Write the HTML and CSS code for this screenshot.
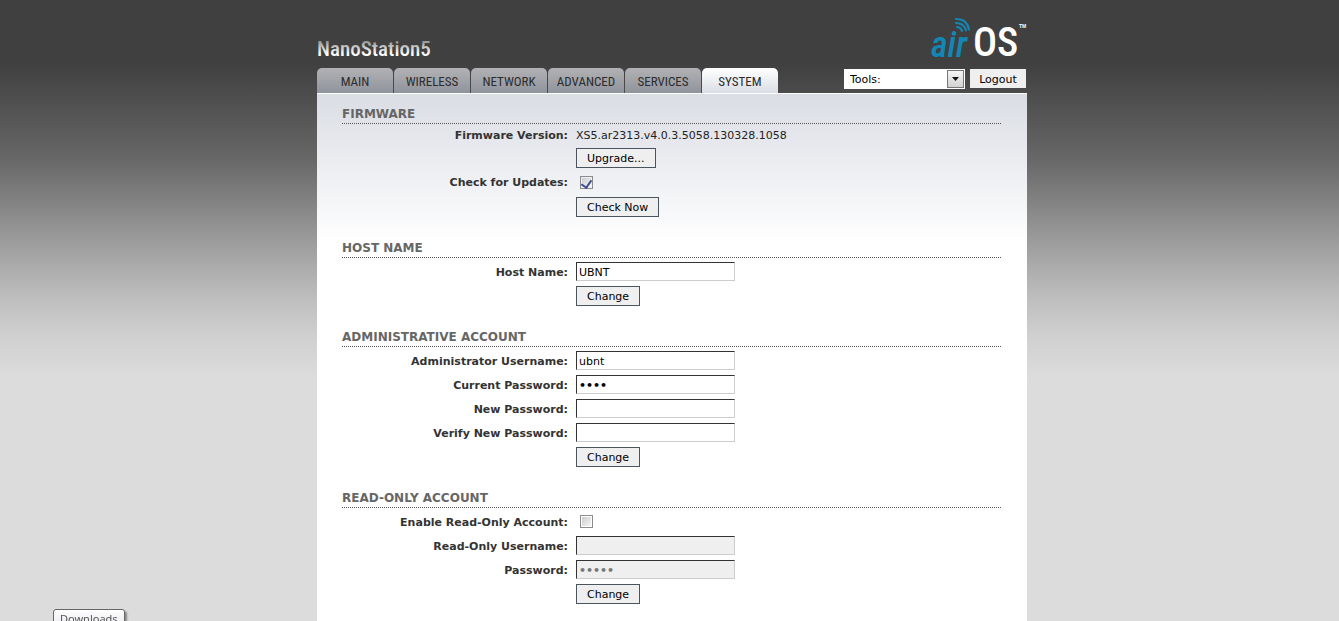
FILE: index.html
```html
<!DOCTYPE html>
<html lang="en">
<head>
<meta charset="utf-8">
<title>NanoStation5 - System</title>
<link rel="stylesheet" href="styles.css">
</head>
<body>
<div class="page">
  <header class="header">
    <h1 class="device"><svg width="116" height="24" role="img" aria-label="NanoStation5">
      <defs><linearGradient id="silver" x1="0" y1="0" x2="0" y2="1"><stop offset=".2" stop-color="#999"/><stop offset=".7" stop-color="#fff"/></linearGradient></defs>
      <text class="device-text" x="0" y="18" fill="url(#silver)">NanoStation5</text>
    </svg></h1>
    <svg class="logo" width="96" height="46" role="img" aria-label="airOS">
      <text class="logo-air" x="0" y="41">air</text>
      <text class="logo-os" x="42" y="40">OS</text>
      <text class="logo-tm" x="88" y="12">TM</text>
      <g fill="none" stroke="#1287b5" stroke-width="2" stroke-linecap="round">
        <path d="M26 11q4 .5 5 4"/>
        <path d="M25 7q8 0 10 7.500"/>
        <path d="M25 3q11 0 13 10.500"/>
      </g>
    </svg>
  </header>
  <div class="bar">
    <nav class="tabs">
      <a class="tab" href="#main">MAIN</a>
      <a class="tab" href="#wireless">WIRELESS</a>
      <a class="tab" href="#network">NETWORK</a>
      <a class="tab" href="#advanced">ADVANCED</a>
      <a class="tab" href="#services">SERVICES</a>
      <a class="tab tab-active" href="#system">SYSTEM</a>
    </nav>
    <div class="tools">
      <div class="select-wrap">
        <select class="select" aria-label="Tools"><option>Tools:</option></select>
        <span class="arrow"><svg width="7" height="4"><path d="M0 0h7L3.500 4z" fill="#111"/></svg></span>
      </div>
      <button class="logout" type="button">Logout</button>
    </div>
  </div>
  <main class="panel">
    <section class="section firmware">
      <h2 class="heading">FIRMWARE</h2>
      <div class="row row-version"><span class="label">Firmware Version:</span><span>XS5.ar2313.v4.0.3.5058.130328.1058</span></div>
      <div class="row"><button class="button" type="button">Upgrade...</button></div>
      <div class="row row-updates"><label class="label" for="updates">Check for Updates:</label><input class="check" id="updates" type="checkbox" checked></div>
      <div class="row"><button class="button" type="button">Check Now</button></div>
    </section>
    <section class="section">
      <h2 class="heading">HOST NAME</h2>
      <div class="row"><label class="label" for="host">Host Name:</label><input class="field" id="host" type="text" value="UBNT"></div>
      <div class="row"><button class="button" type="button">Change</button></div>
    </section>
    <section class="section">
      <h2 class="heading">ADMINISTRATIVE ACCOUNT</h2>
      <div class="row"><label class="label" for="admin">Administrator Username:</label><input class="field" id="admin" type="text" value="ubnt"></div>
      <div class="row"><label class="label" for="current">Current Password:</label><input class="field" id="current" type="password" value="ubnt"></div>
      <div class="row"><label class="label" for="new">New Password:</label><input class="field" id="new" type="password"></div>
      <div class="row"><label class="label" for="verify">Verify New Password:</label><input class="field" id="verify" type="password"></div>
      <div class="row"><button class="button" type="button">Change</button></div>
    </section>
    <section class="section">
      <h2 class="heading">READ-ONLY ACCOUNT</h2>
      <div class="row"><label class="label" for="readonly">Enable Read-Only Account:</label><input class="check" id="readonly" type="checkbox"></div>
      <div class="row"><label class="label" for="rouser">Read-Only Username:</label><input class="field" id="rouser" type="text" disabled></div>
      <div class="row"><label class="label" for="ropass">Password:</label><input class="field" id="ropass" type="password" value="guest" disabled></div>
      <div class="row"><button class="button" type="button">Change</button></div>
    </section>
  </main>
</div>
<div class="tooltip" role="tooltip">Downloads</div>
</body>
</html>
```
FILE: styles.css
```css
* { box-sizing: border-box; }
html { height: 100%; overflow: hidden; }
body {
  margin: 0;
  padding: 0 0 0 5px;
  min-height: 100%;
  display: flex;
  background: #dcdcdc linear-gradient(#404040 64px, #676767 159px, #9a9a9a 238px, #bebebe 298px, #d0d0d0 337px, #dcdcdc 377px) no-repeat;
  font: 11px/14px Verdana, "DejaVu Sans", sans-serif;
  color: #222;
}
.page { width: 100%; max-width: 710px; margin: 0 auto; display: flex; flex-direction: column; }
.header { display: flex; justify-content: space-between; align-items: flex-end; height: 68px; padding-bottom: 6px; }
.device { margin: 0; height: 24px; }
.device svg, .logo { display: block; overflow: visible; }
.device-text { font: 500 21px "Roboto Condensed", "Liberation Sans Narrow", sans-serif; }
.logo-air { font: italic 500 36px "Roboto Condensed", "Liberation Sans Narrow", sans-serif; fill: #1287b5; }
.logo-os { font: 500 40px "Roboto Condensed", "Liberation Sans Narrow", sans-serif; fill: #fff; }
.logo-tm { font: bold 5px "Liberation Sans", sans-serif; fill: #fff; }
.bar { display: flex; justify-content: space-between; align-items: flex-start; }
.tabs { display: flex; gap: 1px; }
.tab {
  width: 76px;
  height: 25px;
  border-radius: 5px 5px 0 0;
  background: linear-gradient(#b2b2b4, #8f939b);
  color: #2c2c2e;
  font: 13px/27px "Roboto Condensed", "Liberation Sans Narrow", sans-serif;
  text-align: center;
  text-decoration: none;
}
.tab-active { background: linear-gradient(#fff, #dadde4); }
.tools { display: flex; gap: 5px; padding: 1px 1px 0 0; }
.select-wrap { position: relative; width: 121px; height: 20px; }
.select {
  appearance: none;
  width: 100%;
  height: 20px;
  padding: 1px 5px 0;
  border: 1px solid #fff;
  border-radius: 0;
  background: #fff;
  color: #000;
  font: inherit;
}
.arrow {
  position: absolute;
  top: 1px;
  right: 1px;
  width: 17px;
  height: 18px;
  display: flex;
  align-items: center;
  justify-content: center;
  border: 1px solid #777;
  background: linear-gradient(#f4f4f4, #d2d2d2);
  pointer-events: none;
}
.logout { width: 56px; height: 19px; padding: 2px 0 0; border: 0; background: #efefef; color: #000; font: inherit; }
.panel {
  flex: 1;
  padding: 0 26px 17px 25px;
  border-top: 1px solid #fff;
  background: #fff linear-gradient(#dadde4, #fff 150px) no-repeat;
}
.section { display: flex; flex-direction: column; }
.heading {
  margin: 0 0 2px;
  padding-top: 20px;
  border-bottom: 1px dotted #555;
  color: #666;
  font-size: 12px;
  line-height: 18px;
}
.firmware .heading { padding-top: 11px; }
.row { display: grid; grid-template-columns: 226px 1fr; column-gap: 8px; align-items: center; justify-items: start; height: 24px; }
.row-version { height: 20px; }
.row-updates { height: 25px; }
.row > :last-child { grid-column: 2; }
.label { justify-self: end; padding-top: 1px; font-weight: bold; color: #333; }
.row-version .label { padding-top: 0; }
.button { height: 20px; padding: 1px 10px 0; border: 1px solid #4a5560; background: #efefef; color: #000; font: inherit; }
.field {
  width: 159px;
  height: 19px;
  margin: 0 0 1px;
  padding: 2px 2px 0;
  border: 1px solid;
  border-color: #333 #ccc #ccc #333;
  background: #fff;
  color: #000;
  font: inherit;
}
.field[type="password"] { font-weight: bold; }
.field:disabled { background: #efefef; color: #777; }
.check {
  appearance: none;
  width: 13px;
  height: 13px;
  margin: 0 0 1px 4px;
  border: 1px solid #8a8c90;
  background: linear-gradient(135deg, #ccc, #f6f6f6) content-box;
  padding: 1px;
  display: flex;
  justify-content: center;
}
.check:checked::before {
  content: "";
  width: 5px;
  height: 8px;
  border: solid #3f4f8f;
  border-width: 0 2px 2px 0;
  transform: rotate(35deg);
}
.tooltip {
  position: fixed;
  left: 53px;
  bottom: -7px;
  height: 19px;
  padding: 0 6px;
  border: 1px solid #666;
  border-radius: 3px;
  background: linear-gradient(#fff, #e8e8f0);
  box-shadow: 2px 2px 2px #888;
  color: #555;
  font: 11px/18px "Noto Sans", sans-serif;
}
```
